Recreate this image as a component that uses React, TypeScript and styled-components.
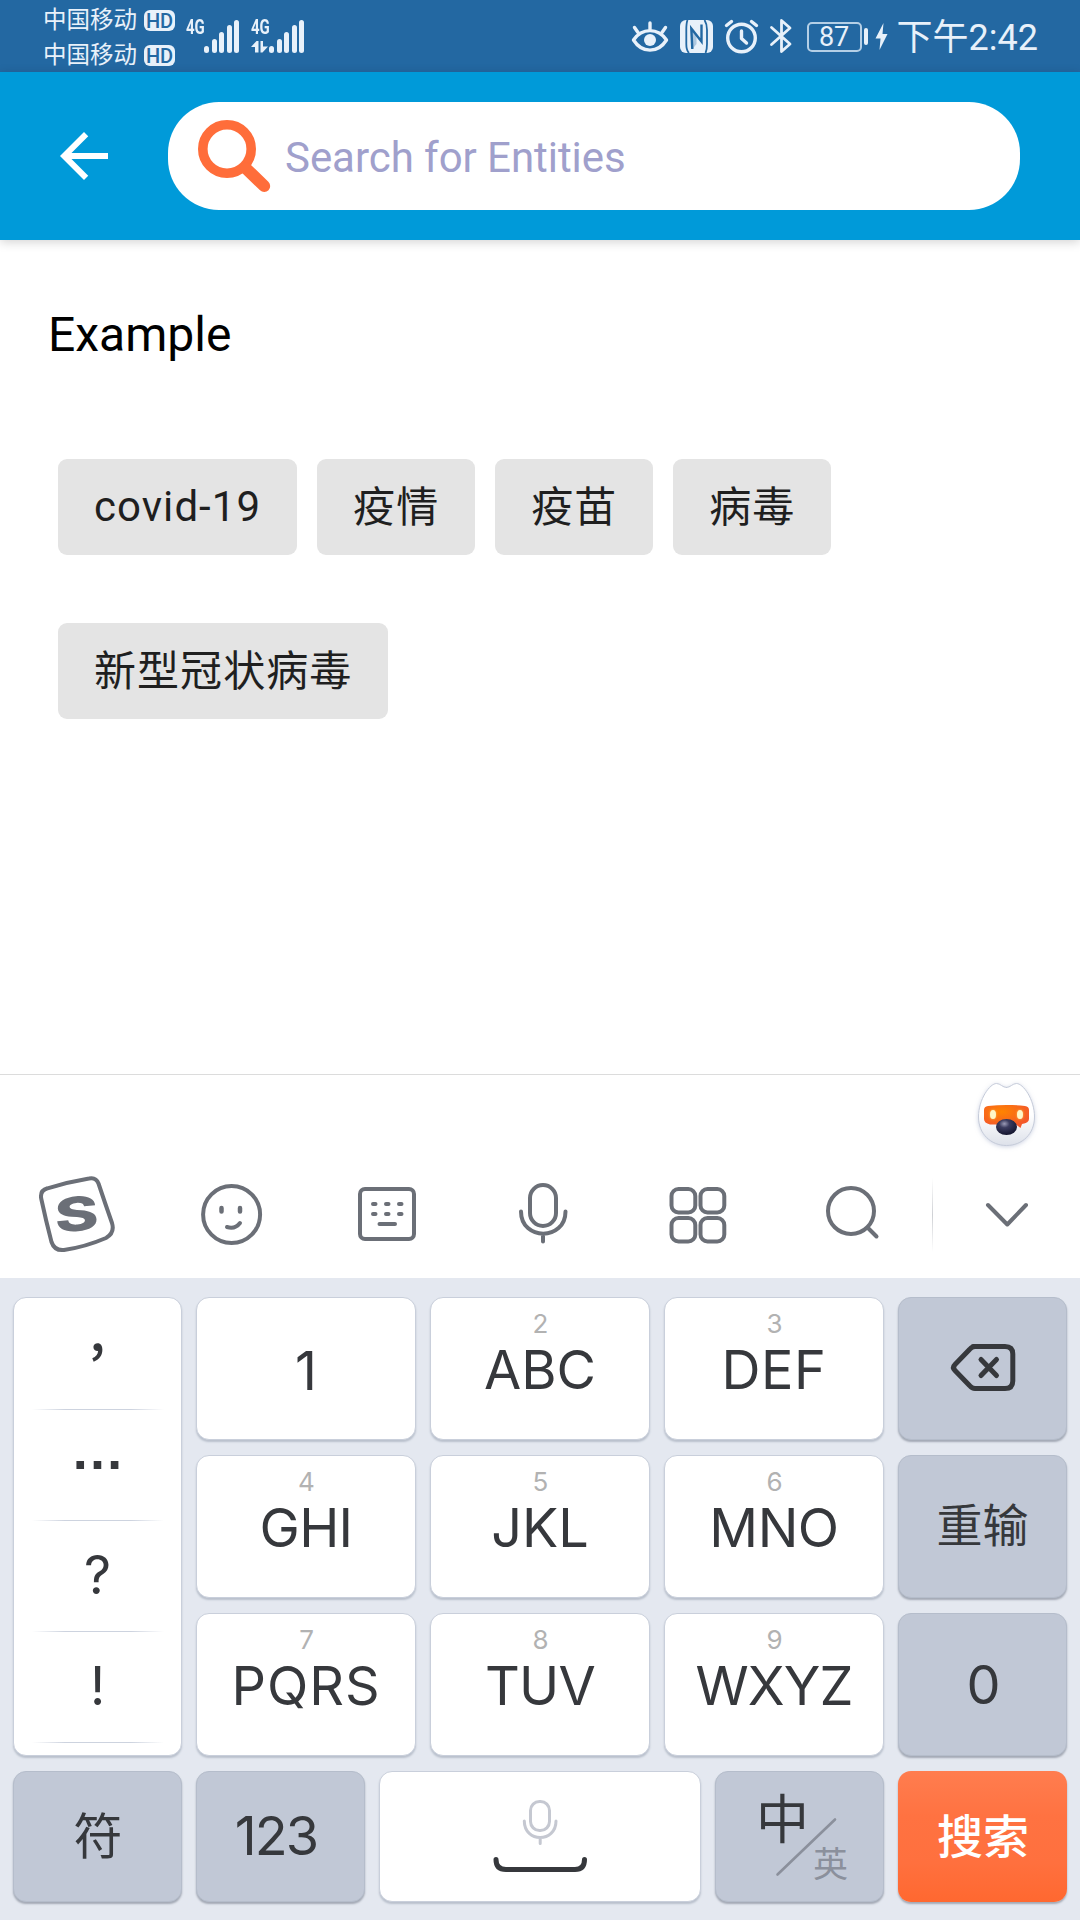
import React from "react";
import styled, { createGlobalStyle } from "styled-components";

const latin = `Roboto, "Noto Sans CJK SC", sans-serif`;
const keyFont = `Inter, "Noto Sans CJK SC", sans-serif`;
const ink = "#36383c";
const toolInk = "#6b6f77";
const statusInk = "#e8f1fa";

const GlobalStyle = createGlobalStyle`
  *, *::before, *::after { box-sizing: border-box; }
  body { margin: 0; background: #fff; }
`;

const Screen = styled.main`
  display: flex;
  flex-direction: column;
  width: 1080px;
  height: 1920px;
  overflow: hidden;
  background: #fff;
  font-family: ${latin};
`;

/* ---------- status bar ---------- */

const StatusBar = styled.header`
  display: flex;
  justify-content: space-between;
  height: 72px;
  padding: 0 42px 0 43px;
  background: #2368a2;
  color: ${statusInk};
`;

const StatusGroup = styled.div`
  display: flex;
`;

const Carriers = styled.div`
  display: flex;
  flex-direction: column;
  padding-top: 3px;
`;

const Carrier = styled.div`
  display: flex;
  align-items: center;
  gap: 7px;
  height: 35px;
  font-size: 23.5px;
  line-height: 35px;
`;

const HdBadge = styled.span`
  display: flex;
  align-items: center;
  justify-content: center;
  width: 31px;
  height: 21px;
  border-radius: 6px;
  background: ${statusInk};
  color: #2368a2;
  font: 500 20px/22px Roboto, sans-serif;
`;

const Signals = styled.div`
  display: flex;
  gap: 11px;
  margin: 18px 0 0 11px;
`;

const Signal = styled.div`
  display: flex;
  align-items: flex-end;
  width: 54px;
  height: 35px;
`;

const SignalType = styled.div`
  display: flex;
  flex-direction: column;
  justify-content: space-between;
  align-items: flex-start;
  width: 18px;
  height: 35px;
  font: 700 20px/18px Roboto, sans-serif;
`;

const Network = styled.span`
  transform: scaleX(0.75);
  transform-origin: 0 50%;
  white-space: nowrap;
`;

const Bars = styled.div`
  display: flex;
  align-items: flex-end;
  gap: 2.5px;
  height: 34px;
`;

const Bar = styled.i<{ $h: number }>`
  width: 5px;
  height: ${(p) => p.$h}px;
  border-radius: 2.5px;
  background: ${statusInk};
`;

const Battery = styled.div`
  display: flex;
  align-items: center;
  justify-content: center;
  width: 55px;
  height: 30px;
  margin: 22px 0 0 15px;
  border: 2px solid #b4cfe6;
  border-radius: 5px;
  font: 400 27px/28px Roboto, sans-serif;
`;

const Nub = styled.i`
  width: 4px;
  height: 17px;
  margin: 28px 0 0 2px;
  border-radius: 2px;
  background: ${statusInk};
`;

const Clock = styled.time`
  margin-left: 9px;
  font-size: 36px;
  line-height: 76px;
  white-space: nowrap;
`;

/* ---------- app bar and content ---------- */

const AppBar = styled.nav`
  display: flex;
  align-items: center;
  height: 168px;
  padding: 0 60px 0 48px;
  background: #009ad9;
  box-shadow: 0 2px 10px rgba(0, 0, 0, 0.18);
`;

const BackButton = styled.button`
  display: flex;
  width: 72px;
  height: 72px;
  margin-right: 48px;
  padding: 0;
  border: 0;
  background: none;
`;

const SearchField = styled.label`
  display: flex;
  align-items: center;
  flex: 1;
  height: 108px;
  padding-left: 30px;
  border-radius: 51px;
  background: #fff;
`;

const Placeholder = styled.span`
  margin: 3px 0 0 14px;
  color: #a0a0cc;
  font-size: 42px;
  line-height: 50px;
  letter-spacing: -0.05px;
`;

const Content = styled.section`
  height: 834px;
  padding: 67px 48px 0;
`;

const Heading = styled.h1`
  margin: 0 0 96px;
  color: #000;
  font-size: 48px;
  font-weight: 400;
  line-height: 56px;
`;

const Chips = styled.div`
  display: flex;
  flex-wrap: wrap;
  gap: 68px 20px;
  padding: 0 10px;
`;

const Chip = styled.button<{ $drop: number }>`
  height: 96px;
  padding: ${(p) => p.$drop}px 36px 0;
  border: 0;
  border-radius: 9px;
  background: #e4e4e4;
  color: #1f1f1f;
  font-family: ${latin};
  font-size: 42px;
  line-height: 94px;
  letter-spacing: 1.05px;
  white-space: nowrap;
`;

/* ---------- keyboard ---------- */

const MascotRow = styled.div`
  display: flex;
  justify-content: flex-end;
  height: 82px;
  padding: 2px 37px 0 0;
  border-top: 1px solid #dcdcdc;
`;

const Tools = styled.div`
  display: grid;
  grid-template-columns: 154px 155.3px 155.3px 156.3px 154.3px 157px 1fr;
  height: 122px;
`;

const Tool = styled.button<{ $divided?: boolean }>`
  display: flex;
  justify-content: center;
  padding: 18px 0 0;
  border: 0;
  background: ${(p) =>
    p.$divided
      ? "linear-gradient(#fff, #cfd1d5 50%, #fff) 0 22px / 1px 74px no-repeat"
      : "none"};
`;

const Keyboard = styled.section`
  display: grid;
  grid-template-columns: 169px 220px 220px 220px 169px;
  grid-template-rows: 143px 143px 143px;
  gap: 15px 14px;
  height: 493px;
  padding: 19px 13px 0;
  background: #e4e8f0;
  font-family: ${keyFont};
  color: ${ink};
`;

const BottomRow = styled.section`
  display: grid;
  grid-template-columns: 169px 169px 322px 169px 169px;
  grid-template-rows: 131px;
  gap: 14px;
  height: 149px;
  padding: 0 13px;
  background: #e4e8f0;
  font-family: ${keyFont};
  color: ${ink};
`;

type Tone = "light" | "grey" | "accent";
const fills: Record<Tone, string> = {
  light: "#fff",
  grey: "#c1c8d6",
  accent: "linear-gradient(#ff7d4f, #ff7241 35%, #ff703e 70%, #ff6830)",
};
const borders: Record<Tone, string> = {
  light: "#c9cfdb",
  grey: "#b5bdcb",
  accent: "transparent",
};

const KeyCap = styled.button<{ $tone: Tone }>`
  display: flex;
  flex-direction: column;
  align-items: center;
  padding: 0;
  border: 1px solid ${(p) => borders[p.$tone]};
  border-radius: 13px;
  background: ${(p) => fills[p.$tone]};
  background-origin: border-box;
  box-shadow: 0 2px 2px ${(p) => (p.$tone === "light" ? "#b9c0cc" : "#a3a9b5")};
  color: inherit;
  font-family: inherit;
`;

const Hint = styled.span`
  height: 26px;
  margin: 13px 0 0 1px;
  color: #b2b2b2;
  font-size: 26px;
  line-height: 26px;
`;

const Letters = styled.span<{ $top: number; $track?: number; $shift?: number; $weight?: number }>`
  margin: ${(p) => p.$top}px 0 0 ${(p) => p.$shift ?? 0}px;
  font-size: 54px;
  font-weight: ${(p) => p.$weight ?? 390};
  line-height: 60px;
  letter-spacing: ${(p) => p.$track ?? 0}px;
`;

const Hanzi = styled.span<{ $top: number; $size: number; $accent?: boolean; $shift?: number }>`
  margin: ${(p) => p.$top}px 0 0 ${(p) => p.$shift ?? 0}px;
  color: ${(p) => (p.$accent ? "#fff" : ink)};
  font-family: "Noto Sans CJK SC", sans-serif;
  font-size: ${(p) => p.$size}px;
  font-weight: ${(p) => (p.$accent ? 500 : 400)};
  line-height: 60px;
`;

const Punctuation = styled.div`
  grid-row: 1 / 4;
  display: flex;
  flex-direction: column;
  border: 1px solid #c9cfdb;
  border-radius: 13px;
  background: #fff;
  box-shadow: 0 2px 2px #b9c0cc;
`;

const Mark = styled.button<{ $font?: string; $weight?: number; $size?: number; $top: number }>`
  height: 111px;
  padding: ${(p) => p.$top}px 0 0;
  border: 0;
  background: linear-gradient(90deg, #fff, #cdd3df 25%, #cdd3df 75%, #fff) 50% 100% / 132px 1px no-repeat;
  color: ${ink};
  font-family: ${(p) => p.$font ?? keyFont};
  font-weight: ${(p) => p.$weight ?? 400};
  font-size: ${(p) => p.$size ?? 53}px;
  line-height: 60px;
  display: flex;
  justify-content: center;
  align-items: flex-start;

  &:first-child { height: 112px; }
`;

const LanguageKey = styled(KeyCap)`
  display: grid;
  grid-template-columns: 90px 1fr;
  grid-template-rows: 70px 1fr;
  align-items: start;
  justify-items: start;
`;

const Primary = styled.span`
  grid-area: 1 / 1;
  margin: 14px 0 0 40px;
  font: 400 53px/60px "Noto Sans CJK SC", sans-serif;
`;

const Secondary = styled.span`
  grid-area: 2 / 2;
  margin: 0 0 0 7px;
  color: #8b909c;
  font: 400 35px/40px "Noto Sans CJK SC", sans-serif;
`;

const Slash = styled.svg`
  grid-area: 1 / 1 / 3 / 3;
`;

/* ---------- drawings ---------- */

type DrawProps = { box: [number, number, number, number]; color?: string; width?: number; top?: number; left?: number; children: React.ReactNode };

const Svg = styled.svg<{ $top: number; $left: number }>`
  display: block;
  flex: none;
  margin: ${(p) => p.$top}px 0 0 ${(p) => p.$left}px;
`;

function Draw({ box, color = toolInk, width = 4, top = 0, left = 0, children }: DrawProps) {
  return (
    <Svg $top={top} $left={left} width={box[2]} height={box[3]} viewBox={box.join(" ")} fill="none"
      stroke={color} strokeWidth={width} strokeLinecap="round" strokeLinejoin="round">
      {children}
    </Svg>
  );
}

const BackIcon = () => (
  <svg width="72" height="72" viewBox="0 0 24 24" fill="#fff">
    <path d="M20 11H7.83l5.59-5.59L12 4l-8 8 8 8 1.41-1.41L7.83 13H20v-2z" />
  </svg>
);

const OrangeSearch = () => (
  <Draw box={[198, 120, 73, 73]} color="#ff6d3a" width={9.6}>
    <circle cx="227" cy="149" r="24.2" />
    <path d="M246 168.500L264.200 186" strokeWidth="12" />
  </Draw>
);

const EyeIcon = () => (
  <Draw box={[630, 18, 40, 36]} color={statusInk} width={3.4} top={18}>
    <path d="M633.500 40C642 27.500 658 27.500 666.500 40C658 53.500 642 53.500 633.500 40Z" />
    <circle cx="650" cy="40" r="6" fill={statusInk} stroke="none" />
    <path d="M650 23V29M634.500 27.500L638 32.500M665.500 27.500L662 32.500" />
  </Draw>
);

const NfcIcon = () => (
  <Draw box={[680, 20, 33, 33]} color="#2368a2" width={1.8} top={20} left={10}>
    <rect x="680" y="20" width="33" height="33" rx="6" fill={statusInk} stroke="none" />
    <path d="M687.500 20C686.300 23 686.300 26 686.300 30V44C686.300 48 687 51 689 53M704.500 20C706.500 23 707 26 707 30V44C707 48 706.500 51 705.500 53" strokeLinecap="butt" />
    <path d="M692.300 49L691.300 28.500L701.500 41.500V24.500" strokeWidth="2.400" strokeLinejoin="miter" strokeLinecap="butt" />
    <path d="M691.500 29L696.500 36V44L692.500 49Z" fill="#2368a2" fillOpacity="0.300" stroke="none" />
  </Draw>
);

const AlarmIcon = () => (
  <Draw box={[724, 18, 36, 37]} color={statusInk} width={3.4} top={18} left={11}>
    <circle cx="741.500" cy="38" r="13.800" />
    <path d="M741.500 31V38.500L746.500 43M726.500 25.500L731.500 21.500M756.500 25.500L751.500 21.500" />
  </Draw>
);

const BluetoothIcon = () => (
  <Draw box={[768, 17, 24, 38]} color={statusInk} width={2.8} top={17} left={8}>
    <path d="M771.500 27.500L790 44L781.500 51.500V20.500L790 28L771.500 44.500" />
  </Draw>
);

const BoltIcon = () => (
  <Draw box={[875, 22, 13, 29]} color="none" top={22} left={7}>
    <path d="M883.500 23L875.500 38.500H880.500L879.500 50L887.500 34H882.500Z" fill={statusInk} stroke="none" />
  </Draw>
);

const DataArrows = () => (
  <svg width="17" height="12" viewBox="0 0 17 12" fill={statusInk}>
    <path d="M0 6L5.500 0H7.500V11.500H4V6ZM9.500 0H12V5.500H17L11.500 11.500H9.500Z" />
  </svg>
);

const Mascot = () => (
  <Draw box={[970, 1077, 73, 76]} color="none">
    <defs>
      <linearGradient id="fur" x1="0" y1="0" x2="0" y2="1">
        <stop offset="0.5" stopColor="#fff" />
        <stop offset="1" stopColor="#dde1ea" />
      </linearGradient>
      <radialGradient id="visor" cx="0.4" cy="0.3" r="0.65">
        <stop offset="0" stopColor="#ff8400" />
        <stop offset="1" stopColor="#f4592a" />
      </radialGradient>
      <radialGradient id="nose" cx="0.4" cy="0.3" r="0.7">
        <stop offset="0" stopColor="#9b9bb6" />
        <stop offset="0.35" stopColor="#3c3d60" />
        <stop offset="1" stopColor="#14152f" />
      </radialGradient>
      <filter id="soft" x="-20%" y="-20%" width="140%" height="140%">
        <feDropShadow dx="0" dy="1" stdDeviation="2" floodColor="#9fa9c8" floodOpacity="0.5" />
      </filter>
      <filter id="glow" x="-80%" y="-80%" width="260%" height="260%">
        <feDropShadow dx="0" dy="0" stdDeviation="1" floodColor="#ffd060" floodOpacity="0.8" />
      </filter>
    </defs>
    <path filter="url(#soft)" fill="url(#fur)" stroke="#c5cbd9" strokeWidth="1"
      d="M1006.500 1087.500C1010.500 1087.500 1012.500 1083.500 1016.500 1083.500C1023 1083.500 1034.500 1099 1034.500 1117C1034.500 1134 1022 1145.500 1006.500 1145.500C991 1145.500 978.500 1134 978.500 1117C978.500 1099 990 1083.500 996.500 1083.500C1000.500 1083.500 1002.500 1087.500 1006.500 1087.500Z" />
    <path fill="url(#visor)" stroke="none"
      d="M984 1110Q984 1106.500 988 1106C1000 1104.500 1013 1104.500 1025 1106Q1029 1106.500 1029 1110V1119Q1029 1123 1022 1124L1020.500 1128L1016 1124.500H990Q984 1123 984 1119Z" />
    <g fill="#fff7c8" stroke="none" filter="url(#glow)">
      <ellipse cx="993" cy="1114.500" rx="3" ry="4.500" />
      <ellipse cx="1020" cy="1114.500" rx="3" ry="4.500" />
    </g>
    <ellipse cx="1006.500" cy="1127" rx="10.500" ry="8" fill="url(#nose)" stroke="none" />
  </Draw>
);

const LogoIcon = () => (
  <Draw box={[37, 1174, 80, 82]}>
    <path d="M41.300 1199Q39.500 1190.500 47.500 1188.300Q68 1182 89 1178.500Q96 1177 98.500 1183.500Q105 1203 112 1223Q115 1233 106 1238Q85 1247 64 1250Q54.500 1251 51.500 1242Q46 1221 41.300 1199Z" />
    <text transform="translate(77.500 1230.800) rotate(-5) skewX(-2) scale(1.420 1)" textAnchor="middle" fill={toolInk} stroke="none"
      fontFamily="Inter, sans-serif" fontWeight="800" fontSize="47">S</text>
  </Draw>
);

const SmileIcon = () => (
  <Draw box={[200, 1174, 64, 82]}>
    <circle cx="231.600" cy="1214.500" r="28.500" />
    <path d="M221.500 1208V1211.500M240 1208V1211.500" strokeWidth="4.500" />
    <path d="M227 1227Q235 1229.500 240 1223" />
  </Draw>
);

const BoardIcon = () => (
  <Draw box={[355, 1174, 64, 82]}>
    <rect x="360" y="1189" width="54" height="50" rx="5" />
    <path d="M373 1204H375.500M386 1204H388.500M399 1204H401.500M373 1214H375.500M386 1214H388.500M399 1214H401.500M379.500 1224H395" />
  </Draw>
);

const MicIcon = () => (
  <Draw box={[511, 1174, 64, 82]}>
    <rect x="530" y="1185" width="26" height="41" rx="13" />
    <path d="M521 1211.500C521 1241 565.500 1241 565.500 1211.500M543 1235V1241.500" />
  </Draw>
);

const AppsIcon = () => (
  <Draw box={[666, 1174, 64, 82]}>
    {[671.5, 700.5].map((x) => [1189, 1218].map((y) => (
      <rect key={`${x}-${y}`} x={x} y={y} width="23.800" height="23.500" rx="7" />
    )))}
  </Draw>
);

const FindIcon = () => (
  <Draw box={[822, 1174, 64, 82]}>
    <circle cx="851" cy="1211" r="23" />
    <path d="M868 1228L876.500 1236.500" />
  </Draw>
);

const ChevronIcon = () => (
  <Draw box={[974, 1174, 64, 82]}>
    <path d="M988 1205L1007.300 1224.500L1026 1205" />
  </Draw>
);

const DeleteIcon = () => (
  <Draw box={[948, 1340, 70, 55]} color={ink} width={5} top={42}>
    <path d="M973 1346.500H1005Q1012.800 1346.500 1012.800 1354V1381Q1012.800 1388.500 1005 1388.500H975Q972 1388.500 969.500 1385.500L955 1370.500Q952 1367.500 955 1364.500L969.500 1349.500Q972 1346.500 975 1346.500Z" />
    <path d="M981 1359.500L996.500 1375.500M996.500 1359.500L981 1375.500" />
  </Draw>
);

const SpaceIcon = () => (
  <Draw box={[485, 1790, 110, 90]} color="#c5c8d1" width={3} top={18}>
    <rect x="530.500" y="1801.500" width="19" height="29" rx="9" />
    <path d="M524.300 1821C524.300 1843 556 1843 556 1821M540.200 1838V1843.500" />
    <path d="M496 1859.500Q496 1869.500 506 1869.500H575Q584.500 1869.500 584.500 1859.500" stroke={ink} strokeWidth="5" />
  </Draw>
);

/* ---------- pieces ---------- */

const SignalMeter = ({ active }: { active?: boolean }) => (
  <Signal>
    <SignalType>
      <Network>4G</Network>
      {active && <DataArrows />}
    </SignalType>
    <Bars>
      {[7, 14, 21, 28, 33].map((h) => <Bar key={h} $h={h} />)}
    </Bars>
  </Signal>
);

const LetterKey = ({ hint, label, track }: { hint: string; label: string; track?: number }) => (
  <KeyCap $tone="light">
    <Hint>{hint}</Hint>
    <Letters $top={3} $track={track}>{label}</Letters>
  </KeyCap>
);

const chips = ["covid-19", "疫情", "疫苗", "病毒", "新型冠状病毒"];
const tools = [LogoIcon, SmileIcon, BoardIcon, MicIcon, AppsIcon, FindIcon];

export default function App() {
  return (
    <Screen>
      <GlobalStyle />
      <StatusBar>
        <StatusGroup>
          <Carriers>
            <Carrier>中国移动<HdBadge>HD</HdBadge></Carrier>
            <Carrier>中国移动<HdBadge>HD</HdBadge></Carrier>
          </Carriers>
          <Signals>
            <SignalMeter />
            <SignalMeter active />
          </Signals>
        </StatusGroup>
        <StatusGroup>
          <EyeIcon />
          <NfcIcon />
          <AlarmIcon />
          <BluetoothIcon />
          <Battery>87</Battery>
          <Nub />
          <BoltIcon />
          <Clock>下午2:42</Clock>
        </StatusGroup>
      </StatusBar>

      <AppBar>
        <BackButton aria-label="Back"><BackIcon /></BackButton>
        <SearchField>
          <OrangeSearch />
          <Placeholder>Search for Entities</Placeholder>
        </SearchField>
      </AppBar>

      <Content>
        <Heading>Example</Heading>
        <Chips>
          {chips.map((c) => <Chip key={c} $drop={c.startsWith("covid") ? 0 : 2}>{c}</Chip>)}
        </Chips>
      </Content>

      <MascotRow><Mascot /></MascotRow>
      <Tools>
        {tools.map((Icon, i) => <Tool key={i}><Icon /></Tool>)}
        <Tool $divided><ChevronIcon /></Tool>
      </Tools>

      <Keyboard>
        <Punctuation>
          <Mark $top={0} $font='"Noto Sans CJK SC", sans-serif' $weight={500}>,</Mark>
          <Mark $top={10} $font='"Liberation Sans", sans-serif' $weight={700} $size={54}>…</Mark>
          <Mark $top={24}>?</Mark>
          <Mark $top={24}>!</Mark>
        </Punctuation>
        <KeyCap $tone="light"><Letters $top={43} $weight={430}>1</Letters></KeyCap>
        <LetterKey hint="2" label="ABC" />
        <LetterKey hint="3" label="DEF" track={0.5} />
        <KeyCap $tone="grey" aria-label="Delete"><DeleteIcon /></KeyCap>
        <LetterKey hint="4" label="GHI" track={-0.7} />
        <LetterKey hint="5" label="JKL" />
        <LetterKey hint="6" label="MNO" track={-0.5} />
        <KeyCap $tone="grey"><Hanzi $top={36} $size={46}>重输</Hanzi></KeyCap>
        <LetterKey hint="7" label="PQRS" track={1} />
        <LetterKey hint="8" label="TUV" track={-0.7} />
        <LetterKey hint="9" label="WXYZ" track={-0.9} />
        <KeyCap $tone="grey"><Letters $top={41} $shift={2}>0</Letters></KeyCap>
      </Keyboard>

      <BottomRow>
        <KeyCap $tone="grey"><Hanzi $top={31} $size={49} $shift={1}>符</Hanzi></KeyCap>
        <KeyCap $tone="grey"><Letters $top={34} $track={-2} $shift={-9}>123</Letters></KeyCap>
        <KeyCap $tone="light" aria-label="Space"><SpaceIcon /></KeyCap>
        <LanguageKey $tone="grey">
          <Primary>中</Primary>
          <Slash width="167" height="129" viewBox="716 1772 167 129">
            <path d="M777.500 1874.500L835 1819.500" stroke="#8b909c" strokeWidth="2.600" strokeLinecap="round" />
          </Slash>
          <Secondary>英</Secondary>
        </LanguageKey>
        <KeyCap $tone="accent"><Hanzi $top={31} $size={46} $shift={1} $accent>搜索</Hanzi></KeyCap>
      </BottomRow>
    </Screen>
  );
}
